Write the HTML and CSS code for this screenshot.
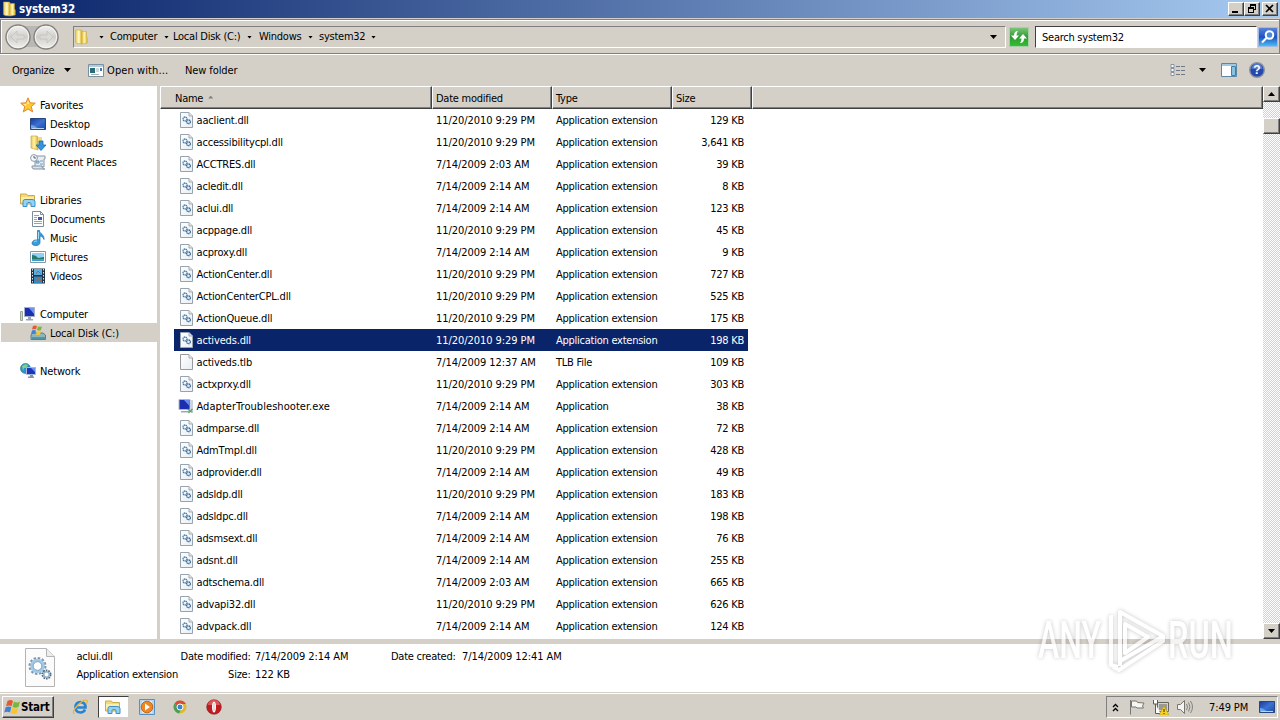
FILE: index.html
```
<!DOCTYPE html>
<html lang="en">
<head>
    <meta charset="UTF-8">
    <meta name="viewport" content="width=device-width, initial-scale=1.0">
    <title>system32</title>
    <link rel="stylesheet" href="styles.css">
</head>
<body>
    <!-- Shared icons -->
    <svg class="defs">
        <defs>
            <linearGradient id="gold" x1="0" x2="1"><stop offset="0" stop-color="#e6c95c"/><stop offset=".45" stop-color="#fff3a5"/><stop offset="1" stop-color="#d9b53a"/></linearGradient>
            <linearGradient id="blue" x1="0" y1="0" x2="1" y2="1"><stop offset="0" stop-color="#173a9c"/><stop offset=".5" stop-color="#3d72d0"/><stop offset="1" stop-color="#1a4aa8"/></linearGradient>
            <linearGradient id="paper" x1="0" y1="0" x2="1" y2="1"><stop offset="0" stop-color="#fff"/><stop offset="1" stop-color="#e9eef2"/></linearGradient>
            <linearGradient id="nav" x1="0" y1="0" x2="0" y2="1"><stop offset="0" stop-color="#f4f4f2"/><stop offset=".5" stop-color="#d0cecb"/><stop offset="1" stop-color="#f3f2ef"/></linearGradient>
            <linearGradient id="green" x1="0" y1="0" x2="0" y2="1"><stop offset="0" stop-color="#7fc87c"/><stop offset=".5" stop-color="#2f9a35"/><stop offset="1" stop-color="#2fc32c"/></linearGradient>
            <linearGradient id="azure" x1="0" y1="0" x2="0" y2="1"><stop offset="0" stop-color="#5d86dc"/><stop offset=".5" stop-color="#1d50c4"/><stop offset="1" stop-color="#48c3f4"/></linearGradient>
        </defs>
        <symbol id="folder" viewBox="0 0 16 16">
            <path d="M1.500 1h6l.5 1v13l-5-.5-1.500-1z" fill="url(#gold)" stroke="#c9a53b" stroke-width=".5"/>
            <path d="M8 2.500h4.500v5.500l.8 1v5L8 15z" fill="url(#gold)" stroke="#c9a53b" stroke-width=".5"/>
            <path d="M5 2v12" stroke="#fffbd8"/>
        </symbol>
        <symbol id="dll" viewBox="0 0 16 16">
            <path d="M2.500.5h8.500l3.500 3.500v11.500h-12z" fill="url(#paper)" stroke="#97a4ae"/>
            <path d="M11 .5v3.500h3.500" fill="#dfe5e9" stroke="#a5adb3"/>
            <circle cx="7" cy="7" r="2" fill="#eaf5fc" stroke="#4c7ba6" stroke-width="1.300" stroke-dasharray="1.400 .4"/>
            <circle cx="10.500" cy="9.800" r="1.900" fill="#d9ebf7" stroke="#2f5f90" stroke-width="1.200" stroke-dasharray="1.300 .4"/>
        </symbol>
        <symbol id="blank" viewBox="0 0 16 16">
            <path d="M2.500.5h8.500l3.500 3.500v11.500h-12z" fill="url(#paper)" stroke="#979b9f"/>
            <path d="M11 .5v3.500h3.500" fill="#eee" stroke="#a9adb0"/>
        </symbol>
        <symbol id="app" viewBox="0 0 16 16">
            <path d="M1 1.500h11v10H1z" fill="#1c2fae" stroke="#b1b7cc"/>
            <path d="M6 2h5.500v6z" fill="#6a8cf0"/>
            <path d="M3 13h8v1.500H3z" fill="#9ea7b4"/>
            <path d="M12 2h3v12h-3z" fill="#ccd5dd"/>
            <path d="M9.500 11l5 3.500M14.500 11l-4 4" stroke="#5f9f72" stroke-width="1.300"/>
        </symbol>
        <symbol id="star" viewBox="0 0 16 16">
            <path d="M8 .8l2 5 5.300.4-4.100 3.400 1.500 5.300L8 12l-4.700 2.900 1.500-5.300L.7 6.200 6 5.800z" fill="#ffc933" stroke="#e3872c"/>
            <path d="M8 3.500l1.200 3.300H6.800zM3.500 7h3L5.800 9z" fill="#fff1a0"/>
        </symbol>
        <symbol id="desktop" viewBox="0 0 16 16">
            <path d="M.5 2.500h15v11H.5z" fill="url(#blue)" stroke="#274580"/>
            <path d="M1 13V9c4 0 5 3 9 4z" fill="#6ba5e8"/>
            <path d="M2 12.500h12" stroke="#b9d4f2"/>
        </symbol>
        <symbol id="downloads" viewBox="0 0 16 16">
            <path d="M1 1h6l1 1v13l-7-2z" fill="url(#gold)" stroke="#cda940" stroke-width=".7"/>
            <path d="M8 2h4v10H8z" fill="#f4db78"/>
            <path d="M9 6h4v4h3l-5 5.500L6 10h3z" fill="#3294df" stroke="#176bb5" stroke-width=".8"/>
        </symbol>
        <symbol id="recent" viewBox="0 0 16 16">
            <path d="M5 2h10v3h-1v8H5z" fill="#e8edf1" stroke="#8796a4"/>
            <path d="M2 12h10c0 3 2 3 3 3H4c-2 0-2-2-2-3z" fill="#dce3e9" stroke="#8192a0"/>
            <path d="M6 7h3v2H6zM10 7h3M10 10h3" stroke="#6e9ac0" fill="#b4d0e6"/>
            <circle cx="4" cy="4" r="3.400" fill="#f6f8fa" stroke="#8b9aa6"/>
            <path d="M4 2v2h2" fill="none" stroke="#55636e"/>
        </symbol>
        <symbol id="libraries" viewBox="0 0 16 16">
            <path d="M.5 3V2h6l1 1.500h7V12H.5z" fill="#f4d976" stroke="#ccab4b"/>
            <path d="M1 5h13v5H1z" fill="#fcedaa"/>
            <path d="M3 14.500v-5q0-2 2-2h7q3 0 3 2v5h-4v-3q0-1-2-1t-2 1v3z" fill="#94d2f2" stroke="#3d8fc8"/>
        </symbol>
        <symbol id="documents" viewBox="0 0 16 16">
            <path d="M2.500.500h8l3 3v12h-11z" fill="#fff" stroke="#7d8c9a"/>
            <path d="M10.500.500v3h3" fill="none" stroke="#7d8c9a"/>
            <path d="M4 4.500h5M4 6.500h3M4 8.500h3M4 10.500h8M4 12.500h8" stroke="#88a6bf"/>
            <path d="M8 6h4v3H8z" fill="#365e9c"/>
        </symbol>
        <symbol id="music" viewBox="0 0 16 16">
            <path d="M7.500 .5h2c0 3.500 5 3.500 4.500 9-1-3-3-3.500-4-3.500v6.500c0 4-7.500 4-8 1C2 10.500 5 9.500 7.500 10z" fill="#369ddb" stroke="#1673b4" stroke-width=".7"/>
            <path d="M8.500 2v7M4 12q1-1 3-1" fill="none" stroke="#a1dcfa"/>
        </symbol>
        <symbol id="pictures" viewBox="0 0 16 16">
            <path d="M.5 2.500h15v11H.5z" fill="#fff" stroke="#8199aa"/>
            <path d="M2 4h12v8H2z" fill="#91d0f1"/>
            <path d="M2 6q4 0 6 3l6-1v4H2z" fill="#26796d"/>
            <path d="M2 10h12v2H2z" fill="#3da0ca"/>
        </symbol>
        <symbol id="videos" viewBox="0 0 16 16">
            <path d="M1 .5h14v15H1z" fill="#243140"/>
            <path d="M4 1h8v6H4z" fill="#5cafe0"/><path d="M4 8.500h8V15H4z" fill="#318bc3"/>
            <path d="M6 6l2-3 3 3M6 14l2-4 3 3" fill="none" stroke="#a9644f"/>
            <path d="M2.500 1v14M13.500 1v14" stroke="#dbe5ec" stroke-dasharray="1.500 1.500"/>
        </symbol>
        <symbol id="computer" viewBox="0 0 16 16">
            <path d="M.5 5.500h2v9h-2z" fill="#cfd8ca" stroke="#98a692"/>
            <path d="M4.500 1.500h10v9h-10z" fill="#1930b1" stroke="#a3afcd"/>
            <path d="M9 2h5v6z" fill="#6f94ee"/>
            <path d="M8 11h3v2h2v1.500H6V13h2z" fill="#9ba5b4"/>
        </symbol>
        <symbol id="winflag" viewBox="0 0 16 16">
            <path d="M3.500 2q3-1.800 5.500 0L7.600 7.300Q5 5.600 2 7.300z" fill="#e8592b"/>
            <path d="M10 2.500q3 1.800 6 0l-1.500 5.300q-3 1.700-6 0z" fill="#76b837"/>
            <path d="M1.700 8.300Q4.800 6.600 7.300 8.300L6 13.500Q3.200 11.800.2 13.500z" fill="#3d82d5"/>
            <path d="M8.200 8.800q3 1.800 6 0L12.800 14q-3 1.800-6 0z" fill="#f8c62b"/>
        </symbol>
        <symbol id="disk" viewBox="0 0 16 16">
            <path d="M1 10l2-2h10l2.500 2v4.500H1z" fill="#8fb5be" stroke="#607e87"/>
            <path d="M2 13h13" stroke="#4f97a8" stroke-width="2"/>
            <path d="M3 1q2-1 4 0L6 4.500q-2-1-4 0z" fill="#e8592b"/><path d="M8 1.300q2 1 4 0L11 5q-2 1-4 0z" fill="#76b837"/>
            <path d="M2 5.500q2-1 4 0L5 9Q3 8 1 9z" fill="#3d82d5"/><path d="M7 6q2 1 4 0l-1 3.500q-2 1-4 0z" fill="#f8c62b"/>
        </symbol>
        <symbol id="network" viewBox="0 0 16 16">
            <circle cx="5.500" cy="5.500" r="5" fill="#2693ca" stroke="#1f6b9c" stroke-width=".6"/>
            <path d="M2 3q3-3 6-1L6 5 4 5 3 8zM6 7l3-1-1 4z" fill="#7ed18b"/>
            <path d="M6.500 4.500h9v7h-9z" fill="#1b36b6" stroke="#a8b8dc"/>
            <path d="M11 5h4v4z" fill="#6f94ee"/><path d="M10 12h3v1.500h1V15H8v-1.500h2z" fill="#8593aa"/>
        </symbol>
    </svg>

    <header class="title-bar">
        <svg class="icon"><use href="#folder"/></svg>
        <h1>system32</h1>
        <div class="window-buttons">
            <button aria-label="Minimize"><svg viewBox="0 0 10 10"><path d="M1 7h6v2H1z"/></svg></button>
            <button aria-label="Restore"><svg viewBox="0 0 10 10"><path d="M3 0h6v6H7V5h1V2H4v1H3zM1 3h6v6H1zm1 2v3h4V5z" fill-rule="evenodd"/></svg></button>
            <button class="close" aria-label="Close"><svg viewBox="0 0 10 10"><path d="M1 1l7 7M8 1L1 8" stroke="#000" stroke-width="1.700"/></svg></button>
        </div>
    </header>

    <nav class="address-row">
        <svg class="nav-buttons" viewBox="0 0 56 28">
            <path d="M14 3h28v21H14z" fill="#bab8b5"/>
            <g fill="url(#nav)" stroke="#85837f" stroke-width="1.400"><circle cx="14" cy="14" r="12"/><circle cx="42" cy="14" r="12"/></g>
            <g fill="none" stroke="#f6f5f4" stroke-width="1"><circle cx="14" cy="14" r="10.700"/><circle cx="42" cy="14" r="10.700"/></g>
            <path d="M7 14l6-6v4h7v4h-7v4zM49 14l-6-6v4h-7v4h7v4z" fill="#dad9d6" stroke="#c3c1be" stroke-width=".8"/>
        </svg>
        <div class="address">
            <svg class="icon"><use href="#folder"/></svg>
            <i class="arrow first"></i>
            <span class="crumb-computer">Computer</span><i class="arrow"></i>
            <span class="crumb-disk">Local Disk (C:)</span><i class="arrow"></i>
            <span class="crumb-windows">Windows</span><i class="arrow"></i>
            <span class="crumb-system">system32</span><i class="arrow"></i>
            <i class="arrow big last"></i>
        </div>
        <svg class="refresh" viewBox="0 0 20 20">
            <path d="M.5.5h19v19H.5z" fill="url(#green)" stroke="#a9cfaa"/>
            <path d="M9 4Q5 4 5 8.500H2L6 13l4-4.500H7.500Q7.500 6 9 4zM11 16q4 0 4-4.500h3L14 7l-4 4.500h2.500q0 2.500-1.500 4.500z" fill="#fff"/>
        </svg>
        <div class="search-box">Search system32</div>
        <svg class="search-button" viewBox="0 0 20 20">
            <path d="M.5.5h19v19H.5z" fill="url(#azure)" stroke="#9fb9e2"/>
            <circle cx="11.500" cy="8" r="3.800" fill="#4a8add" stroke="#fff" stroke-width="2"/><path d="M8.500 11l-4.500 4.500" stroke="#fff" stroke-width="2.200"/>
        </svg>
    </nav>

    <div class="toolbar">
        <span class="organize">Organize</span><i class="arrow big"></i>
        <svg class="open-icon" viewBox="0 0 16 13">
            <path d="M.5.5h15v12H.5z" fill="#fff" stroke="#7890a0"/><path d="M1 1h14v2H1z" fill="#b4ccdc"/>
            <path d="M2 4h5v5H2z" fill="#266d76"/><path d="M8 5h3M8 7h3M3 10.500h8" stroke="#a6b0b8"/><path d="M12 4h2v3h-2z" fill="#3f79b4"/>
        </svg>
        <span class="open-with">Open with...</span>
        <span class="new-folder">New folder</span>
        <svg class="view-icon" viewBox="0 0 16 13">
            <path d="M1 .5h3v3H1zM1 4.500h3v3H1zM1 8.500h3v3H1z" fill="#fff" stroke="#8792a0"/>
            <path d="M6 2.500h4M11 2.500h4M6 6.500h4M11 6.500h4M6 10.500h4M11 10.500h4" stroke="#6e7988"/>
        </svg>
        <i class="arrow big"></i>
        <svg class="pane-icon" viewBox="0 0 16 14">
            <path d="M.5.5h15v13H.5z" fill="#fff" stroke="#5c86a5"/><path d="M1 1h14v2H1z" fill="#a2c9dd"/><path d="M10.500 3.500h4v9h-4z" fill="#86c3e2" stroke="#417ea4"/>
        </svg>
        <svg class="help-icon" viewBox="0 0 16 16">
            <circle cx="8" cy="8" r="7.300" fill="#2349ae" stroke="#8b92a0" stroke-width="1.400"/><path d="M2.500 7a5.500 5.500 0 0 1 11 0z" fill="#5379cf"/>
            <text x="8" y="12.300" text-anchor="middle">?</text>
        </svg>
    </div>

    <main>
        <aside class="sidebar">
            <ul>
                <li class="group"><svg class="icon"><use href="#star"/></svg>Favorites</li>
                <li><svg class="icon"><use href="#desktop"/></svg>Desktop</li>
                <li><svg class="icon"><use href="#downloads"/></svg>Downloads</li>
                <li><svg class="icon"><use href="#recent"/></svg>Recent Places</li>
            </ul>
            <ul>
                <li class="group"><svg class="icon"><use href="#libraries"/></svg>Libraries</li>
                <li><svg class="icon"><use href="#documents"/></svg>Documents</li>
                <li><svg class="icon"><use href="#music"/></svg>Music</li>
                <li><svg class="icon"><use href="#pictures"/></svg>Pictures</li>
                <li><svg class="icon"><use href="#videos"/></svg>Videos</li>
            </ul>
            <ul>
                <li class="group"><svg class="icon"><use href="#computer"/></svg>Computer</li>
                <li class="active"><svg class="icon"><use href="#disk"/></svg>Local Disk (C:)</li>
            </ul>
            <ul>
                <li class="group"><svg class="icon"><use href="#network"/></svg>Network</li>
            </ul>
        </aside>
        <section class="content">
            <div class="list-header">
                <div class="name">Name <i class="sort"></i></div>
                <div>Date modified</div>
                <div>Type</div>
                <div class="size">Size</div>
                <div class="rest"></div>
            </div>
            <div class="file-list" id="file-list"></div>
        </section>
        <div class="scrollbar">
            <button class="up" aria-label="Scroll up"></button>
            <div class="thumb"></div>
            <button class="down" aria-label="Scroll down"></button>
        </div>
    </main>

    <section class="details">
        <svg class="details-icon" viewBox="0 0 32 40">
            <path d="M1.500.500h21l8 8v30h-29z" fill="#fbfbfb" stroke="#b4b4b4"/><path d="M22.500.500v8h8" fill="#ececec" stroke="#b4b4b4"/>
            <circle cx="13.500" cy="18" r="7" fill="none" stroke="#8194a8" stroke-width="4" stroke-dasharray="2.200 1.465"/>
            <circle cx="13.500" cy="18" r="5.800" fill="#fff" stroke="#9ecbea" stroke-width="3"/>
            <circle cx="13.500" cy="18" r="4.300" fill="none" stroke="#6f88a0" stroke-width=".7"/>
            <circle cx="22.500" cy="26.500" r="3.700" fill="none" stroke="#56697c" stroke-width="2.600" stroke-dasharray="1.500 .825"/>
            <circle cx="22.500" cy="26.500" r="2.800" fill="#fff" stroke="#8fb3cd" stroke-width="1.600"/>
        </svg>
        <div class="file-info"><p>aclui.dll</p><p>Application extension</p></div>
        <div class="labels"><p>Date modified:</p><p>Size:</p></div>
        <div class="modified"><p>7/14/2009 2:14 AM</p><p>122 KB</p></div>
        <div class="created-label"><p>Date created:</p></div>
        <div class="created"><p>7/14/2009 12:41 AM</p></div>
    </section>

    <footer class="taskbar">
        <button class="start"><svg viewBox="0 0 16 16"><use href="#winflag"/></svg>Start</button>
        <div class="tasks">
            <div class="task"><svg class="icon" viewBox="0 0 16 16">
                <path d="M13 10.500q-1.200 3-4.500 3-5 0-5-5.200t5-5.200q5 0 5 5.400H5" fill="none" stroke="#2483d8" stroke-width="2.600"/>
                <path d="M2.500 15Q-1 13.500 5.500 6.500t9.500-5q1 1-1 3.500" fill="none" stroke="#e8b83b" stroke-width="1.300"/>
            </svg></div>
            <div class="task pressed"><svg class="icon"><use href="#libraries"/></svg></div>
            <div class="task"><svg class="icon" viewBox="0 0 16 16">
                <path d="M.5.5h15v15H.5z" fill="#b7d6ef" stroke="#5791c4"/><path d="M3 2h10v12H3z" fill="#dcebf6"/>
                <circle cx="8" cy="8" r="5.800" fill="#ee8622" stroke="#c5681c"/><path d="M6 4.500l5 3.500-5 3.500z" fill="#fff"/>
            </svg></div>
            <div class="task"><svg class="icon" viewBox="0 0 16 16">
                <circle cx="8" cy="8" r="6.500" fill="#e2b92e"/><path d="M8 8L2.400 4.800a6.500 6.500 0 0 1 11.500 .2H8z" fill="#d94a3d"/>
                <path d="M2.400 4.800A6.500 6.500 0 0 0 7 14.400l3-5.400-2-1z" fill="#4a9f58"/><circle cx="8" cy="8" r="3" fill="#3f82d2" stroke="#fff"/>
            </svg></div>
            <div class="task"><svg class="icon" viewBox="0 0 16 16">
                <circle cx="8" cy="8" r="7.300" fill="#be1c22" stroke="#8e1519" stroke-width=".6"/><path d="M2 6a6 5 0 0 1 12 0z" fill="#dc5658"/>
                <ellipse cx="8" cy="8" rx="2" ry="5.500" fill="#fff"/><path d="M8 4v8" stroke="#d9b5b5"/>
            </svg></div>
        </div>
        <div class="tray">
            <svg class="chevrons" viewBox="0 0 7 9"><path d="M1 4l2.500-2.500L6 4M1 8l2.500-2.500L6 8" fill="none" stroke="#000" stroke-width="1.300"/></svg>
            <svg class="icon" viewBox="0 0 16 16"><path d="M1.500 1v14.500M2.500 2h5l1 1.500 6.500.5-1.500 3 1 2H8L7 8H2.500z" fill="#f6f5f2" stroke="#77756f"/></svg>
            <svg class="icon" viewBox="0 0 16 16">
                <path d="M4.500 3.500h11v9h-11z" fill="#d5d4cf" stroke="#66645d"/><path d="M6 5h8v6H6z" fill="#9a9994"/>
                <path d="M.5 1v4h4V1M2.500 5v9.500h5" fill="#fff" stroke="#5e5c56"/><path d="M11 7l5 9H6z" fill="#f7d321" stroke="#b89515" stroke-width=".6"/>
                <path d="M11 10v3M11 14v1" stroke="#332a00"/>
            </svg>
            <svg class="icon" viewBox="0 0 16 16"><path d="M.5 5.500h3l4-4v13l-4-4h-3z" fill="#f5f4f1" stroke="#77756f"/><path d="M9.500 5q2 3 0 6M11.500 3.500q3 4.500 0 9M13.500 2q4 6 0 12" fill="none" stroke="#85837e"/></svg>
            <span class="clock">7:49 PM</span>
            <svg class="icon show-desktop"><use href="#desktop"/></svg>
        </div>
    </footer>

    <svg class="watermark" viewBox="0 0 240 80">
        <g class="mark">
            <text x="4" y="54" textLength="63" lengthAdjust="spacingAndGlyphs">ANY</text>
            <text x="134" y="54" textLength="65" lengthAdjust="spacingAndGlyphs">RUN</text>
            <path d="M79 13h-2v48l7 2M86 62V8l43 24v5L85 66l-6-3M86 57l42-24M91 49V20l23 13z"/>
        </g>
    </svg>

    <script>
        // name, modified, type, size
        const files = [
            ['aaclient.dll', '11/20/2010 9:29 PM', 'Application extension', '129 KB'],
            ['accessibilitycpl.dll', '11/20/2010 9:29 PM', 'Application extension', '3,641 KB'],
            ['ACCTRES.dll', '7/14/2009 2:03 AM', 'Application extension', '39 KB'],
            ['acledit.dll', '7/14/2009 2:14 AM', 'Application extension', '8 KB'],
            ['aclui.dll', '7/14/2009 2:14 AM', 'Application extension', '123 KB'],
            ['acppage.dll', '11/20/2010 9:29 PM', 'Application extension', '45 KB'],
            ['acproxy.dll', '7/14/2009 2:14 AM', 'Application extension', '9 KB'],
            ['ActionCenter.dll', '11/20/2010 9:29 PM', 'Application extension', '727 KB'],
            ['ActionCenterCPL.dll', '11/20/2010 9:29 PM', 'Application extension', '525 KB'],
            ['ActionQueue.dll', '11/20/2010 9:29 PM', 'Application extension', '175 KB'],
            ['activeds.dll', '11/20/2010 9:29 PM', 'Application extension', '198 KB'],
            ['activeds.tlb', '7/14/2009 12:37 AM', 'TLB File', '109 KB'],
            ['actxprxy.dll', '11/20/2010 9:29 PM', 'Application extension', '303 KB'],
            ['AdapterTroubleshooter.exe', '7/14/2009 2:14 AM', 'Application', '38 KB'],
            ['admparse.dll', '7/14/2009 2:14 AM', 'Application extension', '72 KB'],
            ['AdmTmpl.dll', '11/20/2010 9:29 PM', 'Application extension', '428 KB'],
            ['adprovider.dll', '7/14/2009 2:14 AM', 'Application extension', '49 KB'],
            ['adsldp.dll', '11/20/2010 9:29 PM', 'Application extension', '183 KB'],
            ['adsldpc.dll', '7/14/2009 2:14 AM', 'Application extension', '198 KB'],
            ['adsmsext.dll', '7/14/2009 2:14 AM', 'Application extension', '76 KB'],
            ['adsnt.dll', '7/14/2009 2:14 AM', 'Application extension', '255 KB'],
            ['adtschema.dll', '7/14/2009 2:03 AM', 'Application extension', '665 KB'],
            ['advapi32.dll', '11/20/2010 9:29 PM', 'Application extension', '626 KB'],
            ['advpack.dll', '7/14/2009 2:14 AM', 'Application extension', '124 KB']
        ];
        const icons = { dll: 'dll', tlb: 'blank', exe: 'app' };
        const list = document.getElementById('file-list');

        files.forEach(([name, date, type, size]) => {
            const row = document.createElement('div');
            row.className = name === 'activeds.dll' ? 'file selected' : 'file';
            const icon = icons[name.split('.').pop()];
            row.innerHTML = `<svg class="icon"><use href="#${icon}"/></svg><span class="file-name ${icon}">${name}</span><span class="date">${date}</span><span>${type}</span><span class="size">${size}</span>`;
            list.appendChild(row);
        });
    </script>
</body>
</html>
```
FILE: styles.css
```
* {
    margin: 0;
    padding: 0;
    box-sizing: border-box;
}

body {
    display: flex;
    flex-direction: column;
    width: 1280px;
    height: 720px;
    overflow: hidden;
    background-color: #d4d0c8;
    color: #000;
    font: 11px/14px Tahoma, "DejaVu Sans Condensed", "DejaVu Sans", sans-serif;
    letter-spacing: -0.25px;
    white-space: nowrap;
}

svg {
    display: block;
    flex: none;
}

.defs {
    position: absolute;
    width: 0;
    height: 0;
}

.icon {
    width: 16px;
    height: 16px;
}

button {
    font: inherit;
    background-color: #d4d0c8;
    border: 1px solid;
    border-color: #fff #404040 #404040 #fff;
    box-shadow: inset -1px -1px #808080;
}

/* Title bar */
.title-bar {
    display: flex;
    align-items: center;
    height: 18px;
    padding: 0 2px;
    background: linear-gradient(to right, #0a246a, #a6caf0);
    color: #fff;
}

.title-bar h1 {
    margin-left: 1px;
    font-size: 11.5px;
    letter-spacing: 0;
}

.window-buttons {
    display: flex;
    margin-left: auto;
}

.window-buttons button {
    display: flex;
    align-items: center;
    justify-content: center;
    width: 16px;
    height: 14px;
}

.window-buttons .close {
    margin-left: 2px;
}

.window-buttons svg {
    width: 10px;
    height: 10px;
}

/* Address row */
.address-row {
    display: flex;
    align-items: center;
    height: 35px;
    margin-top: 1px;
    padding: 1px 1px 0 2.5px;
    border: 1px solid #808080;
    box-shadow: inset 1px 1px #fff, 0 1px #fff;
}

.nav-buttons {
    width: 56px;
    height: 28px;
}

.address {
    display: flex;
    align-items: center;
    width: 933px;
    height: 22px;
    margin-left: 13.5px;
    border: 1px solid;
    border-color: #808080 #fff #fff #808080;
}

.arrow {
    flex: none;
    width: 5px;
    height: 3px;
    background-color: #000;
    clip-path: polygon(0 0, 100% 0, 50% 100%);
}

.arrow.big {
    width: 7px;
    height: 4px;
}

.arrow.first {
    margin: 0 6px 0 9px;
}

.crumb-computer {
    width: 54px;
}

.crumb-disk {
    width: 74px;
    margin-left: 4px;
}

.crumb-windows {
    width: 49px;
    margin-left: 7px;
}

.crumb-system {
    width: 52px;
    margin-left: 6px;
}

.arrow.last {
    margin: 0 8px 0 auto;
}

.refresh,
.search-button {
    width: 20px;
    height: 20px;
}

.refresh {
    margin-left: 3px;
}

.search-box {
    width: 222px;
    height: 22px;
    margin: 0 1px 0 6px;
    padding: 4px 6px;
    background-color: #fff;
    border: 1px solid;
    border-color: #404040 #fff #fff #404040;
}

/* Toolbar */
.toolbar {
    display: flex;
    align-items: center;
    height: 32px;
    padding: 0 15px 0 12px;
}

.toolbar span {
    padding-top: 1px;
}

.organize {
    width: 52px;
}

.open-icon {
    width: 16px;
    height: 13px;
    margin-left: 17px;
}

.open-with {
    width: 78px;
    margin-left: 3px;
    letter-spacing: 0.1px;
}

.new-folder {
    letter-spacing: -0.1px;
}

.view-icon {
    width: 16px;
    height: 13px;
    margin: 0 13px 0 auto;
}

.pane-icon {
    width: 16px;
    height: 14px;
    margin: 0 12px 0 15px;
}

.help-icon {
    width: 16px;
    height: 16px;
}

.help-icon text {
    font: bold 12px "Liberation Sans", sans-serif;
    letter-spacing: 0;
    fill: #fff;
}

main {
    display: flex;
    height: 553px;
}

/* Navigation pane */
.sidebar {
    width: 160px;
    padding: 9px 0 0 1px;
    background-color: #fff;
    border-right: 3px solid #d4d0c8;
    letter-spacing: -0.15px;
}

.sidebar ul {
    margin-bottom: 19px;
    list-style: none;
}

.sidebar li {
    display: flex;
    align-items: center;
    gap: 4px;
    height: 19px;
    padding: 2px 0 0 29px;
}

.sidebar li .icon {
    margin-top: -2px;
}

.sidebar li.group {
    padding-left: 19px;
}

.sidebar li.active {
    background-color: #d4d0c8;
}

/* File list */
.content {
    flex-grow: 1;
    background-color: #fff;
}

.list-header {
    display: grid;
    grid-template-columns: 272px 120px 120px 80px 1fr;
    height: 23px;
}

.list-header div {
    display: flex;
    align-items: center;
    padding: 2px 0 0 3px;
    background-color: #d4d0c8;
    border: 1px solid;
    border-color: #fff #404040 #404040 #fff;
    box-shadow: inset -1px -1px #808080;
}

.list-header .name {
    padding-left: 14px;
}

.sort {
    width: 5px;
    height: 3px;
    margin: -3px 0 0 5px;
    background-color: #808080;
    clip-path: polygon(50% 0, 100% 100%, 0 100%);
}

.file {
    display: grid;
    grid-template-columns: 18.5px 239.5px 120px 120px 68px;
    align-items: center;
    width: 574px;
    height: 22px;
    margin-left: 14px;
    padding-left: 4px;
}

.file span {
    padding-top: 2px;
}

.file .icon {
    margin-top: -1px;
}

.file .file-name {
    letter-spacing: -0.17px;
}

.file .file-name.app {
    letter-spacing: 0.05px;
}

.date,
.modified,
.created {
    letter-spacing: -0.06px;
}

.file.selected {
    background-color: #0a246a;
    color: #fff;
}

.file .size {
    text-align: right;
}

/* Scrollbar */
.scrollbar {
    display: flex;
    flex-direction: column;
    width: 17px;
    background: repeating-conic-gradient(#fff 0 25%, #d4d0c8 0 50%) 0 0 / 2px 2px;
}

.scrollbar button {
    display: flex;
    align-items: center;
    justify-content: center;
    height: 16px;
}

.scrollbar button::before {
    content: "";
    width: 7px;
    height: 4px;
    background-color: #000;
    clip-path: polygon(0 0, 100% 0, 50% 100%);
}

.scrollbar .up::before {
    clip-path: polygon(50% 0, 100% 100%, 0 100%);
}

.scrollbar .thumb {
    height: 16px;
    margin-top: 16px;
    background-color: #d4d0c8;
    border: 1px solid;
    border-color: #fff #404040 #404040 #fff;
    box-shadow: inset -1px -1px #808080;
}

.scrollbar .down {
    margin-top: auto;
}

/* Details pane */
.details {
    display: flex;
    height: 48px;
    margin-top: 5px;
    padding: 4px 0 0 24px;
    background-color: #fff;
}

.details p {
    height: 18px;
    line-height: 18px;
}

.details-icon {
    width: 32px;
    height: 40px;
}

.file-info {
    width: 104px;
    margin-left: 20.5px;
}

.labels {
    width: 70px;
    text-align: right;
}

.modified {
    width: 136px;
    margin-left: 4.5px;
}

.created-label {
    width: 71px;
}

/* Taskbar */
.taskbar {
    display: flex;
    flex-grow: 1;
    margin-top: 1px;
    padding-top: 2px;
    border-top: 1px solid #fff;
}

.start {
    display: flex;
    align-items: center;
    gap: 1px;
    width: 52px;
    height: 22px;
    margin-left: 2px;
    padding-left: 1px;
    font-size: 11.5px;
    font-weight: bold;
    letter-spacing: -0.2px;
}

.start svg {
    width: 16px;
    height: 16px;
}

.tasks {
    display: flex;
    gap: 2.5px;
    margin-left: 10px;
}

.task {
    display: flex;
    align-items: center;
    justify-content: center;
    width: 31px;
    height: 22px;
}

.task.pressed {
    background-color: #fff;
    border: 1px solid;
    border-color: #404040 #d4d0c8 #d4d0c8 #404040;
}

.tray {
    display: flex;
    align-items: center;
    width: 172px;
    height: 22px;
    margin: 0 2px 0 auto;
    padding-left: 5px;
    border: 1px solid;
    border-color: #808080 #fff #fff #808080;
}

.tray .icon {
    margin-right: 8px;
}

.chevrons {
    width: 7px;
    height: 9px;
    margin-right: 10px;
}

.clock {
    width: 43px;
    margin: 0 7px 0 8px;
    padding-top: 1px;
    letter-spacing: -0.1px;
}

.tray .show-desktop {
    margin-right: 0;
}

/* Watermark lies over the list and the details pane */
.watermark {
    position: absolute;
    left: 1034px;
    top: 604px;
    width: 240px;
    height: 80px;
}

.mark {
    filter: drop-shadow(0 0 2px rgba(0, 0, 0, 0.3));
    opacity: 0.75;
}

.watermark text {
    font: 500 52px Roboto, sans-serif;
    letter-spacing: 0;
    fill: #fff;
}

.watermark path {
    fill: none;
    stroke: #fff;
    stroke-width: 4;
    stroke-linejoin: round;
}
```
